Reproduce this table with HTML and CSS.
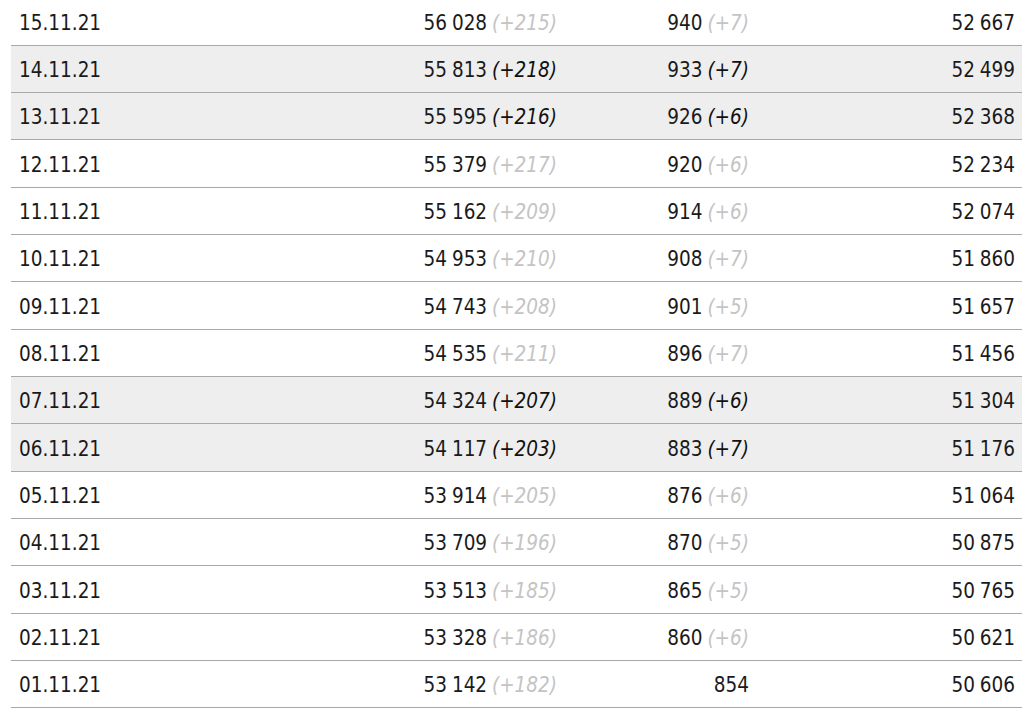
FILE: index.html
```html
<!DOCTYPE html>
<html lang="ru">
<head>
<meta charset="utf-8">
<title>Статистика</title>
<link rel="stylesheet" href="styles.css">
</head>
<body>
<div class="stats">
  <div class="row"><span class="date">15.11.21</span><span class="num">56 028 <i class="d">(+215)</i></span><span class="num">940 <i class="d">(+7)</i></span><span class="num">52 667</span></div>
  <div class="row hl"><span class="date">14.11.21</span><span class="num">55 813 <i class="d">(+218)</i></span><span class="num">933 <i class="d">(+7)</i></span><span class="num">52 499</span></div>
  <div class="row hl"><span class="date">13.11.21</span><span class="num">55 595 <i class="d">(+216)</i></span><span class="num">926 <i class="d">(+6)</i></span><span class="num">52 368</span></div>
  <div class="row"><span class="date">12.11.21</span><span class="num">55 379 <i class="d">(+217)</i></span><span class="num">920 <i class="d">(+6)</i></span><span class="num">52 234</span></div>
  <div class="row"><span class="date">11.11.21</span><span class="num">55 162 <i class="d">(+209)</i></span><span class="num">914 <i class="d">(+6)</i></span><span class="num">52 074</span></div>
  <div class="row"><span class="date">10.11.21</span><span class="num">54 953 <i class="d">(+210)</i></span><span class="num">908 <i class="d">(+7)</i></span><span class="num">51 860</span></div>
  <div class="row"><span class="date">09.11.21</span><span class="num">54 743 <i class="d">(+208)</i></span><span class="num">901 <i class="d">(+5)</i></span><span class="num">51 657</span></div>
  <div class="row"><span class="date">08.11.21</span><span class="num">54 535 <i class="d">(+211)</i></span><span class="num">896 <i class="d">(+7)</i></span><span class="num">51 456</span></div>
  <div class="row hl"><span class="date">07.11.21</span><span class="num">54 324 <i class="d">(+207)</i></span><span class="num">889 <i class="d">(+6)</i></span><span class="num">51 304</span></div>
  <div class="row hl"><span class="date">06.11.21</span><span class="num">54 117 <i class="d">(+203)</i></span><span class="num">883 <i class="d">(+7)</i></span><span class="num">51 176</span></div>
  <div class="row"><span class="date">05.11.21</span><span class="num">53 914 <i class="d">(+205)</i></span><span class="num">876 <i class="d">(+6)</i></span><span class="num">51 064</span></div>
  <div class="row"><span class="date">04.11.21</span><span class="num">53 709 <i class="d">(+196)</i></span><span class="num">870 <i class="d">(+5)</i></span><span class="num">50 875</span></div>
  <div class="row"><span class="date">03.11.21</span><span class="num">53 513 <i class="d">(+185)</i></span><span class="num">865 <i class="d">(+5)</i></span><span class="num">50 765</span></div>
  <div class="row"><span class="date">02.11.21</span><span class="num">53 328 <i class="d">(+186)</i></span><span class="num">860 <i class="d">(+6)</i></span><span class="num">50 621</span></div>
  <div class="row"><span class="date">01.11.21</span><span class="num">53 142 <i class="d">(+182)</i></span><span class="num">854</span><span class="num">50 606</span></div>
</div>
</body>
</html>
```

FILE: styles.css
```css
html, body {
  margin: 0;
  padding: 0;
  background: #ffffff;
}

body {
  font-family: "DejaVu Sans Condensed", "DejaVu Sans", sans-serif;
  font-size: 20.5px;
  color: #1a1a1a;
}

.stats {
  width: 1011px;
  margin: -1.6px 0 0 11px;
}

.row {
  display: grid;
  grid-template-columns: 300px 253px 192px 266px;
  align-items: center;
  height: 47.33px;
  padding-top: 2px;
  box-sizing: border-box;
  border-bottom: 1px solid #a8a8a8;
}

.row.hl {
  background: #eeeeee;
}

.row > span {
  padding: 0 7px 0 8px;
  white-space: nowrap;
}

.num {
  text-align: right;
  word-spacing: -1px;
}

.d {
  font-style: italic;
  color: #c4c4c4;
}

.row.hl .d {
  color: #111111;
}
```
